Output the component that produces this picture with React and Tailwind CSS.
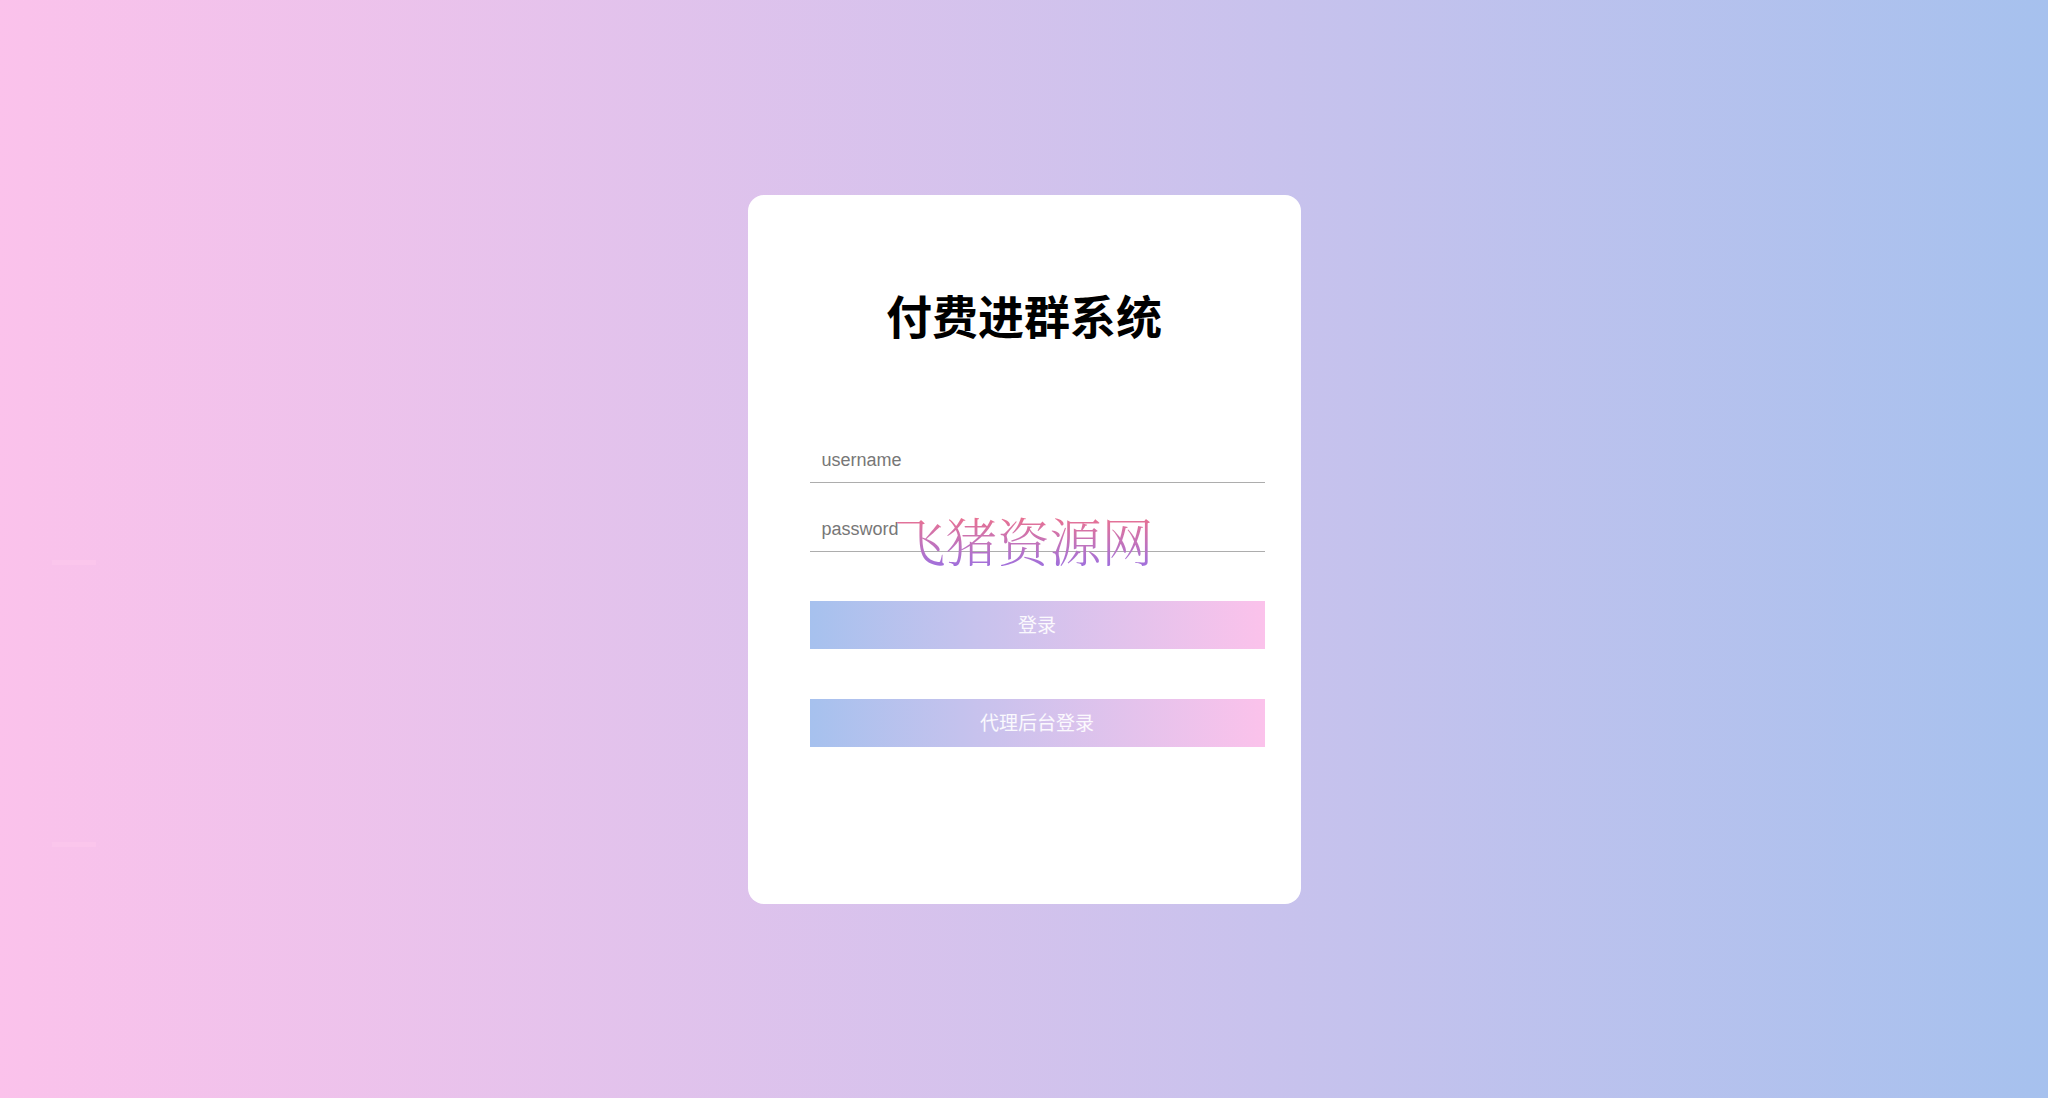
export default function App() {
  const cjk = { fontFamily: '"Liberation Sans", "Noto Sans CJK SC", sans-serif' };
  return (
    <div
      className="relative w-full h-[1098px] overflow-hidden bg-gradient-to-r from-[#fbc2eb] to-[#a6c1ee] flex justify-center items-start pt-[195px]"
      style={cjk}
    >
      <div className="absolute left-[52px] top-[560px] w-[44px] h-[5px] bg-[#fbc6ec]" />
      <div className="absolute left-[52px] top-[842px] w-[44px] h-[5px] bg-[#fbc6ec]" />

      <div className="relative w-[553px] h-[709px] bg-white rounded-[16px] flex flex-col">
        <h1 className="mt-[100px] text-center text-[46px] leading-none font-bold text-black">
          付费进群系统
        </h1>

        <div className="flex flex-col pl-[62px] pr-[36px] mt-[102px]">
          <input
            type="text"
            placeholder="username"
            className="h-[40px] w-full pl-[12px] pb-[5px] text-[18px] text-[#333] placeholder:text-[#777] border-b border-[#adadad] outline-none bg-transparent"
          />
          <input
            type="password"
            placeholder="password"
            className="mt-[29px] h-[40px] w-full pl-[12px] pb-[5px] text-[18px] text-[#333] placeholder:text-[#777] border-b border-[#adadad] outline-none bg-transparent"
          />
          <button className="mt-[49px] h-[48px] w-full pt-[3px] bg-gradient-to-r from-[#a6c1ee] to-[#fbc2eb] text-white/90 text-[19px]">
            登录
          </button>
          <button className="mt-[50px] h-[48px] w-full pt-[3px] bg-gradient-to-r from-[#a6c1ee] to-[#fbc2eb] text-white/90 text-[19px]">
            代理后台登录
          </button>
        </div>

        <div
          className="absolute left-[146px] top-[319px] text-[52px] leading-none font-light bg-gradient-to-b from-[#ee6f8a] to-[#a06fdc] bg-clip-text text-transparent pointer-events-none whitespace-nowrap"
          style={{ fontFamily: '"Noto Serif CJK SC", "Noto Sans CJK SC", serif' }}
        >
          飞猪资源网
        </div>
      </div>
    </div>
  );
}
